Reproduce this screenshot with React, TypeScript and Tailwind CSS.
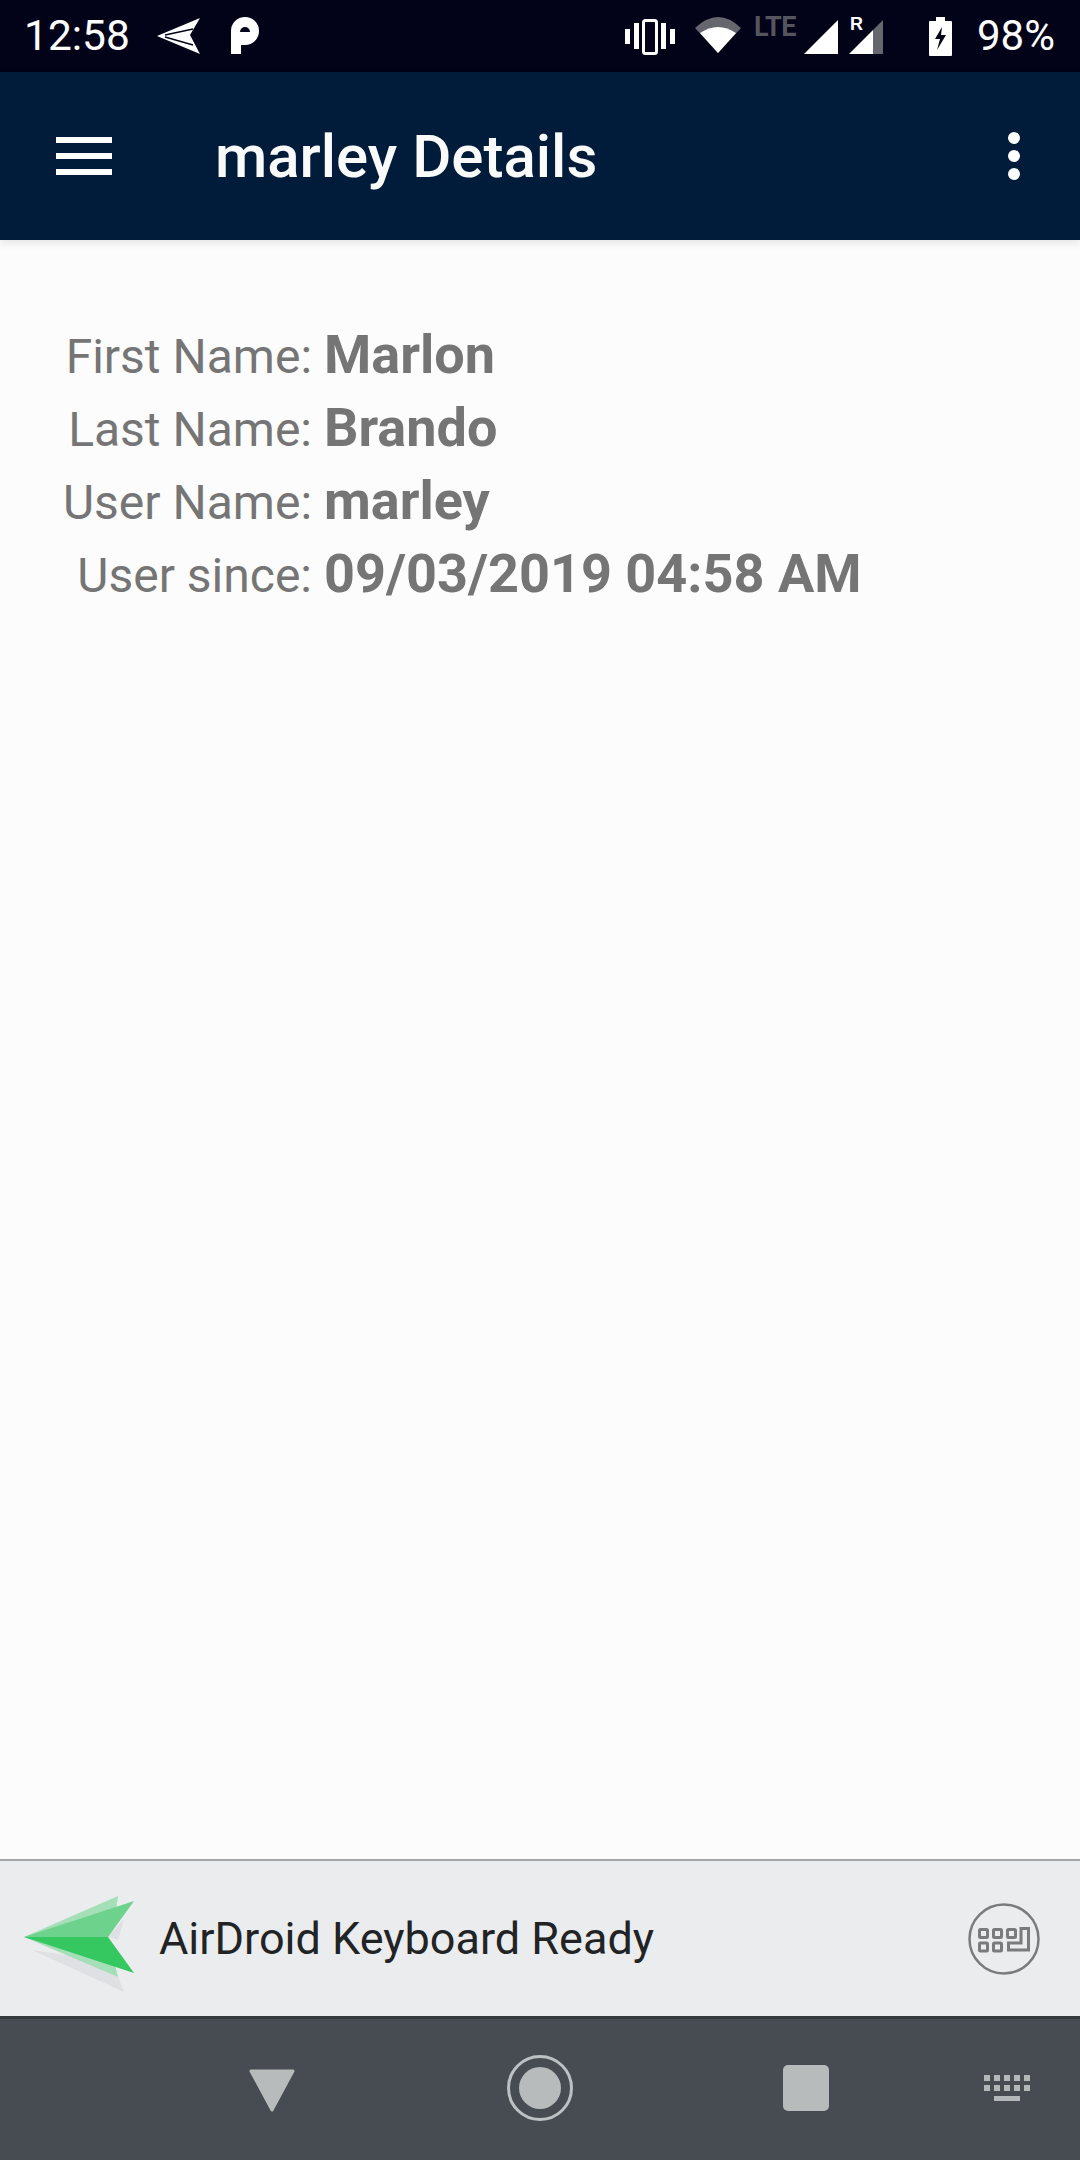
import React from "react";

const Row = ({ label, value }: { label: string; value: string }) => (
  <div className="flex h-[73px] items-baseline">
    <span className="w-[312px] shrink-0 text-right text-[48px] leading-[73px] text-[#757575]">{label}</span>
    <span className="ml-[12px] text-[54px] leading-[73px] font-bold text-[#757575]">{value}</span>
  </div>
);

export default function App() {
  return (
    <div className="flex h-[2160px] w-[1080px] flex-col overflow-hidden bg-[#fcfcfc] font-['Roboto',sans-serif]">
      <div className="flex h-[72px] shrink-0 items-center bg-[#020219] pl-[24px] pr-[25px] text-white">
        <span className="text-[42.5px] leading-none">12:58</span>
        <svg className="ml-[27px]" width="44" height="38" viewBox="0 0 44 38">
          <path d="M0 19 L43 1 L33 18 L43 37 Z" fill="#fff" />
          <path d="M8 18 L36 12 M8 20 L36 28" stroke="#020219" strokeWidth="1.4" />
        </svg>
        <svg className="ml-[29px]" width="30" height="38" viewBox="0 0 30 38">
          <path d="M1 37 V14 A14 14 0 1 1 15 28 H11 V37 Z" fill="#fff" />
          <path d="M10 15 A5 5 0 1 1 20 15 Z" fill="#020219" />
        </svg>
        <div className="ml-auto flex items-center">
          <svg width="50" height="38" viewBox="0 0 50 38">
            <rect x="0" y="12" width="5" height="15" fill="#fff" />
            <rect x="9" y="6" width="5" height="26" fill="#fff" />
            <rect x="36" y="6" width="5" height="26" fill="#fff" />
            <rect x="45" y="12" width="5" height="15" fill="#fff" />
            <rect x="18.5" y="3.5" width="13" height="33" rx="2" fill="none" stroke="#fff" strokeWidth="3" />
          </svg>
          <svg className="ml-[20px]" width="46" height="38" viewBox="0 0 46 38">
            <path d="M0 11 Q23 -11 46 11 L23 36 Z" fill="#66666f" />
            <path d="M5 16 Q23 4 41 16 L23 36 Z" fill="#fff" />
          </svg>
          <div className="ml-[13px] flex h-[38px] w-[44px] items-start">
            <span className="text-[27px] leading-[20px] font-bold tracking-[-0.5px] text-[#55555f]">LTE</span>
          </div>
          <svg className="ml-[6px]" width="34" height="38" viewBox="0 0 34 38">
            <path d="M0 37 L34 3 V37 Z" fill="#fff" />
          </svg>
          <div className="relative ml-[11px] h-[38px] w-[34px]">
            <svg width="34" height="38" viewBox="0 0 34 38">
              <path d="M0 37 L24 13 V37 Z" fill="#fff" />
              <path d="M24 13 L34 3 V37 H24 Z" fill="#66666f" />
            </svg>
            <span className="absolute left-[1px] top-[-1px] font-['Liberation_Sans',sans-serif] text-[18px] leading-[16px] font-bold text-white">R</span>
          </div>
          <svg className="ml-[46px]" width="23" height="39" viewBox="0 0 23 39">
            <path d="M7 0 H16 V4 H22 Q23 4 23 5 V38 Q23 39 22 39 H1 Q0 39 0 38 V5 Q0 4 1 4 H7 Z" fill="#fff" />
            <path d="M13 10 L6 22 H11 L8 33 L17 18 H12 Z" fill="#020219" />
          </svg>
          <span className="ml-[25px] text-[42px] leading-none">98%</span>
        </div>
      </div>

      <div className="z-10 flex h-[168px] shrink-0 items-center bg-[#001c3a] pl-[56px] pr-[60px] shadow-[0_3px_8px_rgba(0,0,0,0.1)]">
        <svg width="56" height="38" viewBox="0 0 56 38">
          <rect y="0" width="56" height="6" fill="#fff" />
          <rect y="16" width="56" height="6" fill="#fff" />
          <rect y="32" width="56" height="6" fill="#fff" />
        </svg>
        <h1 className="ml-[103px] mt-[2px] text-[60px] leading-none font-medium text-[#fafafa]">marley Details</h1>
        <svg className="ml-auto" width="12" height="48" viewBox="0 0 12 48">
          <circle cx="6" cy="6" r="6" fill="#fff" />
          <circle cx="6" cy="24" r="6" fill="#fff" />
          <circle cx="6" cy="42" r="6" fill="#fff" />
        </svg>
      </div>

      <main className="flex min-h-0 flex-1 flex-col pt-[78px]">
        <Row label="First Name:" value="Marlon" />
        <Row label="Last Name:" value="Brando" />
        <Row label="User Name:" value="marley" />
        <Row label="User since:" value="09/03/2019 04:58 AM" />
      </main>

      <div className="flex h-[157px] shrink-0 items-center border-t-2 border-[#a3a5a8] bg-[#ebecee] pl-[23px] pr-[40px]">
        <svg className="mt-[7px]" width="112" height="104" viewBox="0 0 112 104">
          <path d="M9 60 L101 102 L89 72 Z" fill="#dfe0e3" />
          <path d="M85 47 L101 29 L95 50 Z" fill="#dfe0e3" />
          <path d="M1 47 L95 6 L90 40 L85 47 L95 87 Z" fill="#a5dfb8" />
          <path d="M1 47 L111 11 L85 47 Z" fill="#6dd28c" />
          <path d="M1 47 L85 47 L111 83 Z" fill="#36c860" />
        </svg>
        <span className="ml-[24px] text-[45px] leading-none text-[#212325]">AirDroid Keyboard Ready</span>
        <svg className="ml-auto" width="72" height="72" viewBox="0 0 72 72" fill="none" stroke="#797b7d" strokeWidth="2.5">
          <circle cx="36" cy="36" r="34.5" />
          <g strokeWidth="3">
            <rect x="11.5" y="26.5" width="8" height="8" rx="1" />
            <rect x="25.5" y="26.5" width="8" height="8" rx="1" />
            <rect x="39.5" y="26.5" width="8" height="8" rx="1" />
            <rect x="11.5" y="40" width="8" height="8" rx="1" />
            <rect x="25.5" y="40" width="8" height="8" rx="1" />
            <path d="M53 25.5 H60.5 V47 H40.5 V40 H53 Z" />
          </g>
        </svg>
      </div>

      <div className="flex h-[144px] shrink-0 items-center border-t-[3px] border-[#33393d] bg-[#464c52] pb-[3px]">
        <svg className="ml-[248px] mt-[5px]" width="48" height="43" viewBox="0 0 48 43">
          <path d="M3 2 H45 L24 41 Z" fill="#b8bbbb" stroke="#b8bbbb" strokeWidth="3" strokeLinejoin="round" />
        </svg>
        <svg className="ml-[211px]" width="66" height="66" viewBox="0 0 66 66">
          <circle cx="33" cy="33" r="31.5" fill="none" stroke="#bcc1c4" strokeWidth="3" />
          <circle cx="33" cy="33" r="21" fill="#b8bbbb" />
        </svg>
        <div className="ml-[210px] h-[46px] w-[46px] rounded-[5px] bg-[#b8bbbb]" />
        <svg className="ml-[155px]" width="46" height="26" viewBox="0 0 46 26" fill="#b4b7b8">
          {[0, 10, 20, 30, 40].map((x) => (
            <g key={x}>
              <rect x={x} y="0" width="6" height="6" />
              <rect x={x} y="10" width="6" height="6" />
            </g>
          ))}
          <rect x="10" y="21" width="26" height="5" />
        </svg>
      </div>
    </div>
  );
}
